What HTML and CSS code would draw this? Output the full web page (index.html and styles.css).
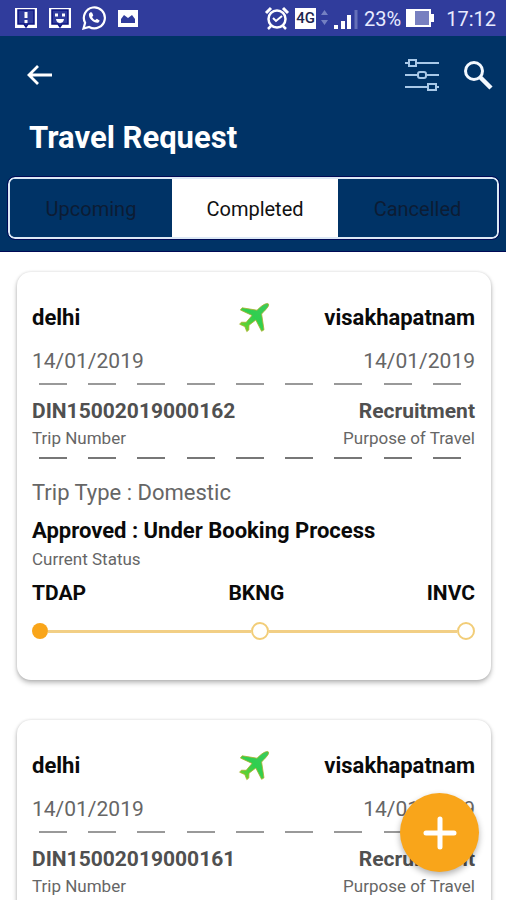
FILE: index.html
```html
<!DOCTYPE html>
<html lang="en">
<head>
<meta charset="utf-8">
<meta name="viewport" content="width=device-width, initial-scale=1">
<title>Travel Request</title>
<link rel="stylesheet" href="styles.css">
</head>
<body>
<svg class="defs" aria-hidden="true">
  <defs>
    <linearGradient id="plane-fill" x1="0" y1="1" x2="1" y2="0">
      <stop offset="0" stop-color="#7ed321"/>
      <stop offset="0.5" stop-color="#2fcf4f"/>
      <stop offset="1" stop-color="#3ccb5c"/>
    </linearGradient>
    <symbol id="plane" viewBox="0 0 32 32">
      <path d="M28.5 1.600C30.500 1 31.200 2.500 30.200 4.400 29 6.500 26.500 8.800 23.600 12L26 27.800 23.600 29.300 17.800 18 11 23.200 10.800 28 8.800 29.600 6.800 24.600 1.600 22.200 3.400 20.200 8.200 20.300 14 13.400 2.400 8 4.200 5.800 19 8.200C22.500 4.800 25.600 2.200 28.500 1.600Z" fill="url(#plane-fill)" stroke="#a9b02a" stroke-width="0.800" stroke-linejoin="round"/>
    </symbol>
  </defs>
</svg>
<div class="app">
  <div class="status-bar">
    <div class="status-group notices">
      <svg width="24" height="24" viewBox="0 0 24 24"><rect x="1" y="2" width="22" height="20" fill="#fff"/><path d="M4 4h16v14h-6l-2 3-2-3H4z" fill="#303c9c" stroke="#0d1480" stroke-width="1.500"/><path d="M12 6v6M12 14v3" stroke="#fff" stroke-width="3"/></svg>
      <svg width="24" height="24" viewBox="0 0 24 24"><rect x="1" y="2" width="22" height="20" fill="#fff"/><path d="M4 4h16v14h-6l-2 3-2-3H4z" fill="#303c9c" stroke="#0d1480" stroke-width="1.500"/><path d="M7 9h3M14 9h3" stroke="#fff" stroke-width="3"/><path d="M8 13h8c-.5 3-2 4-4 4s-3.500-1-4-4z" fill="#fff"/></svg>
      <svg width="24" height="24" viewBox="0 0 24 24"><path d="M1.500 22.500l1.600-5.700A10.500 10.500 0 1 1 7.200 21z" fill="none" stroke="#fff" stroke-width="2.200"/><path d="M8.400 6.300L7 7.700c-1 4.500 5 9.800 9.200 9l1.600-1.900-2.900-2-1.600 1.300c-1.400-.6-2.500-1.800-3.200-3.200l1.200-1.500-1.300-3z" fill="#fff"/></svg>
      <svg width="24" height="24" viewBox="0 0 24 24"><rect x="2" y="4" width="20" height="17" fill="#fff"/><path d="M5 17v-4l3-4 4 3 4-3 3 4v4z" fill="#303c9c"/></svg>
    </div>
    <div class="status-group system">
      <svg width="26" height="26" viewBox="0 0 26 26" fill="none" stroke="#fff"><circle cx="13" cy="14" r="8.500" stroke-width="2.500"/><path d="M2 8l5-5M24 8l-5-5" stroke-width="3"/><path d="M7 21l-3 3M19 21l3 3" stroke-width="2.500"/><path d="M9 13l3 3 6-5" stroke-width="2"/></svg>
      <span class="network">4G</span>
      <svg width="7" height="20" viewBox="0 0 7 20" fill="#7480c2"><path d="M0 7l3.500-5L7 7zM0 12h7l-3.500 5z"/></svg>
      <svg width="26" height="24" viewBox="0 0 26 24"><path d="M3 19v4M10 15v8M16 9v14" stroke="#fff" stroke-width="4"/><path d="M23 4v19" stroke="#6570b8" stroke-width="3"/></svg>
      <span class="battery-level">23%</span>
      <svg width="28" height="20" viewBox="0 0 28 20"><path d="M0 1h25v5h3v8h-3v5H0z" fill="#fff"/><path d="M9 3h14v14H9z" fill="#7880c0"/></svg>
      <time class="clock">17:12</time>
    </div>
  </div>

  <header class="header">
    <div class="toolbar">
      <button class="icon-button" type="button" aria-label="Back">
        <svg width="28" height="24" viewBox="0 0 28 24" fill="none" stroke="#fff" stroke-width="2.800"><path d="M26 12H3M12 3l-9 9 9 9"/></svg>
      </button>
      <div class="actions">
        <button class="icon-button" type="button" aria-label="Filter">
          <svg width="36" height="34" viewBox="0 0 36 34" fill="none" stroke="#a9c9e8" stroke-width="2"><path d="M1 5h4M12 5h23M1 17h13M22 17h13M1 29h23M32 29h3"/><rect x="5" y="2" width="7" height="6"/><rect x="14" y="14" width="8" height="6" rx="2"/><rect x="24" y="26" width="8" height="6"/></svg>
        </button>
        <button class="icon-button" type="button" aria-label="Search">
          <svg width="30" height="30" viewBox="0 0 30 30" fill="none" stroke="#f3f9ff"><circle cx="11" cy="11" r="8.500" stroke-width="3"/><path d="M17 17l11 11" stroke-width="4.500"/></svg>
        </button>
      </div>
    </div>
    <h1 class="title">Travel Request</h1>
    <nav class="tabs">
      <button class="tab" type="button">Upcoming</button>
      <button class="tab active" type="button" aria-current="true">Completed</button>
      <button class="tab" type="button">Cancelled</button>
    </nav>
  </header>

  <main class="list">
    <article class="card">
      <div class="row cities"><span>delhi</span><svg class="plane" width="32" height="32"><use href="#plane"/></svg><span>visakhapatnam</span></div>
      <div class="row dates"><time>14/01/2019</time><time>14/01/2019</time></div>
      <div class="divider"></div>
      <div class="row values"><span>DIN15002019000162</span><span>Recruitment</span></div>
      <div class="row labels"><span>Trip Number</span><span>Purpose of Travel</span></div>
      <div class="divider strong"></div>
      <p class="trip-type">Trip Type : Domestic</p>
      <p class="status">Approved : Under Booking Process</p>
      <p class="labels">Current Status</p>
      <div class="row stages"><span>TDAP</span><span>BKNG</span><span>INVC</span></div>
      <div class="track"><i class="dot done"></i><i class="line first"></i><i class="dot"></i><i class="line"></i><i class="dot"></i></div>
    </article>
    <article class="card">
      <div class="row cities"><span>delhi</span><svg class="plane" width="32" height="32"><use href="#plane"/></svg><span>visakhapatnam</span></div>
      <div class="row dates"><time>14/01/2019</time><time>14/01/2019</time></div>
      <div class="divider"></div>
      <div class="row values"><span>DIN15002019000161</span><span>Recruitment</span></div>
      <div class="row labels"><span>Trip Number</span><span>Purpose of Travel</span></div>
    </article>
  </main>

  <button class="fab" type="button" aria-label="Add travel request">
    <svg width="34" height="34" viewBox="0 0 34 34" stroke="#fff" stroke-width="5" stroke-linecap="round"><path d="M17 3v28M3 17h28"/></svg>
  </button>
</div>
</body>
</html>
```
FILE: styles.css
```css
* {
  box-sizing: border-box;
}

body {
  margin: 0;
  font-family: Roboto, "Liberation Sans", sans-serif;
  background: #fff;
}

h1,
p {
  margin: 0;
}

button {
  padding: 0;
  border: 0;
  font: inherit;
  cursor: pointer;
}

svg {
  display: block;
  flex: none;
}

.defs {
  position: absolute;
  width: 0;
  height: 0;
}

.app {
  position: relative;
  display: flex;
  flex-direction: column;
  height: 100vh;
  overflow: hidden;
}

.status-bar {
  flex: none;
  display: flex;
  justify-content: space-between;
  align-items: center;
  height: 36px;
  padding: 0 10px 0 14px;
  background: #303c9c;
  color: #e8ebff;
  font-size: 20px;
}

.status-group {
  display: flex;
  align-items: center;
}

.notices {
  gap: 10px;
}

.system {
  gap: 5px;
}

.network {
  padding: 0 1px;
  background: #fff;
  color: #20264e;
  font-size: 15px;
  font-weight: 500;
  line-height: 21px;
}

.battery-level,
.clock {
  padding-top: 2px;
}

.clock {
  margin-left: 7px;
}

.header {
  flex: none;
  padding: 20px 7px 12px 8px;
  background: #003366;
  border-bottom: 1px solid #000a55;
}

.toolbar {
  display: flex;
  justify-content: space-between;
  align-items: center;
  height: 38px;
  padding: 0 6px 0 18px;
}

.actions {
  display: flex;
  align-items: center;
  gap: 23px;
}

.icon-button {
  background: none;
}

.title {
  margin: 25px 0 20px 21px;
  color: #fff;
  font-size: 31px;
  font-weight: 700;
  line-height: 38px;
}

.tabs {
  display: grid;
  grid-template-columns: 162fr 166fr 159fr;
  height: 62px;
  border: 2px solid #dce8f5;
  border-radius: 7px;
  overflow: hidden;
  outline: 1px solid #000a55;
}

.tab {
  padding-top: 2px;
  background: #003366;
  color: #0c1c34;
  font-size: 20px;
}

.tab.active {
  background: #fff;
  color: #111;
}

.list {
  flex: 1;
  min-height: 0;
  overflow: hidden;
  padding: 20px 15px 0 17px;
}

.card {
  padding: 30px 16px 40px 15px;
  margin-bottom: 40px;
  border-radius: 14px;
  background: #fff;
  box-shadow: 0 3px 5px rgba(0, 0, 0, 0.26), 0 0 3px rgba(0, 0, 0, 0.14);
}

.row {
  display: flex;
  justify-content: space-between;
  align-items: center;
}

.cities {
  position: relative;
  color: #0a0a0a;
  font-size: 22px;
  font-weight: 700;
  line-height: 32px;
}

.plane {
  position: absolute;
  left: 50%;
  transform: translateX(-50%);
}

.dates {
  margin-top: 14px;
  color: #666;
  font-size: 21px;
  line-height: 26px;
}

.divider {
  height: 2px;
  margin: 9px 14px 0 7px;
  background: repeating-linear-gradient(90deg, #999 0 28px, transparent 28px calc((100% - 28px) / 8));
}

.divider.strong {
  background: repeating-linear-gradient(90deg, #777 0 28px, transparent 28px calc((100% - 28px) / 8));
}

.values {
  margin-top: 13px;
  color: #505050;
  font-size: 21px;
  font-weight: 700;
  line-height: 26px;
}

.labels {
  margin-top: 4px;
  color: #666;
  font-size: 17px;
  line-height: 20px;
}

.trip-type {
  margin-top: 21px;
  color: #666;
  font-size: 22px;
  line-height: 26px;
}

.status {
  margin-top: 11px;
  color: #0a0a0a;
  font-size: 22px;
  font-weight: 700;
  line-height: 28px;
}

.stages {
  margin-top: 11px;
  color: #0a0a0a;
  font-size: 21px;
  font-weight: 700;
  line-height: 26px;
}

.track {
  display: flex;
  align-items: center;
  margin-top: 16px;
}

.dot {
  flex: none;
  width: 18px;
  height: 18px;
  border: 2px solid #f2cd78;
  border-radius: 50%;
}

.dot.done {
  width: 16px;
  height: 16px;
  border: 0;
  background: #f9a51a;
}

.line {
  flex: 188;
  height: 3px;
  background: #f2cf85;
}

.line.first {
  flex: 203;
}

.fab {
  position: absolute;
  right: 27px;
  bottom: 28px;
  display: grid;
  place-items: center;
  width: 79px;
  height: 79px;
  border-radius: 50%;
  background: #f9a51a;
  box-shadow: 0 3px 6px rgba(0, 0, 0, 0.3);
}
```
